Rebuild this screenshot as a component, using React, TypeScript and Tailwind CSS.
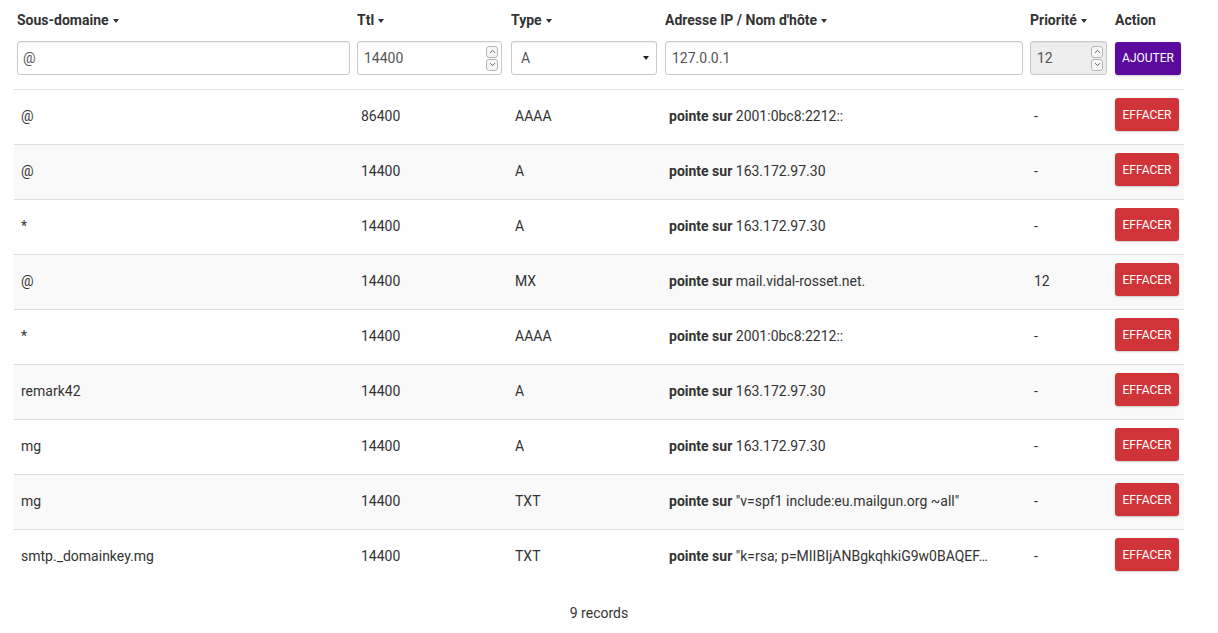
import { ChevronDown, ChevronUp } from "lucide-react";

interface DnsRecord {
  name: string;
  ttl: number;
  type: string;
  target: string;
  priority?: number;
}

const records: DnsRecord[] = [
  { name: "@", ttl: 86400, type: "AAAA", target: "2001:0bc8:2212::" },
  { name: "@", ttl: 14400, type: "A", target: "163.172.97.30" },
  { name: "*", ttl: 14400, type: "A", target: "163.172.97.30" },
  { name: "@", ttl: 14400, type: "MX", target: "mail.vidal-rosset.net.", priority: 12 },
  { name: "*", ttl: 14400, type: "AAAA", target: "2001:0bc8:2212::" },
  { name: "remark42", ttl: 14400, type: "A", target: "163.172.97.30" },
  { name: "mg", ttl: 14400, type: "A", target: "163.172.97.30" },
  { name: "mg", ttl: 14400, type: "TXT", target: "\"v=spf1 include:eu.mailgun.org ~all\"" },
  {
    name: "smtp._domainkey.mg",
    ttl: 14400,
    type: "TXT",
    target: "\"k=rsa; p=MIIBIjANBgkqhkiG9w0BAQEF…",
  },
];

const Caret = () => (
  <svg width="6" height="4" viewBox="0 0 6 4" className="inline-block ml-[4px] mb-[1px]">
    <path d="M0 0h6L3 4z" fill="#333" />
  </svg>
);

// petits boutons haut/bas du champ numérique
const Spinner = () => (
  <div className="flex flex-col gap-[1px]">
    <div className="w-[12px] h-[12px] rounded-[3px] border border-[#b5b5b5] bg-[#f7f7f7] flex items-center justify-center">
      <ChevronUp className="w-[9px] h-[9px] text-[#555]" strokeWidth={2.5} />
    </div>
    <div className="w-[12px] h-[12px] rounded-[3px] border border-[#b5b5b5] bg-[#f7f7f7] flex items-center justify-center">
      <ChevronDown className="w-[9px] h-[9px] text-[#555]" strokeWidth={2.5} />
    </div>
  </div>
);

const inputBase =
  "h-[34px] border border-[#c9c9c9] rounded-[3px] shadow-[inset_0_1px_1px_rgba(0,0,0,0.06)] flex items-center text-[14px] text-[#555]";

export default function App() {
  return (
    <div
      className="w-[1218px] min-h-[633px] bg-white text-[#333] text-[14px]"
      style={{ fontFamily: "Roboto, 'Liberation Sans', sans-serif" }}
    >
      <div className="pl-[14px] w-[1184px]">
        <table className="w-[1170px] table-fixed border-collapse">
          <colgroup>
            <col className="w-[340px]" />
            <col className="w-[154px]" />
            <col className="w-[154px]" />
            <col className="w-[365px]" />
            <col className="w-[85px]" />
            <col className="w-[72px]" />
          </colgroup>
          <thead>
            <tr className="text-left font-bold">
              <th className="pl-[3px] pt-[10px] pb-[6px] leading-[20px]">
                Sous-domaine
                <Caret />
              </th>
              <th className="pl-[3px] pt-[10px] pb-[6px] leading-[20px]">
                Ttl
                <Caret />
              </th>
              <th className="pl-[3px] pt-[10px] pb-[6px] leading-[20px]">
                Type
                <Caret />
              </th>
              <th className="pl-[3px] pt-[10px] pb-[6px] leading-[20px]">
                Adresse IP / Nom d'hôte
                <Caret />
              </th>
              <th className="pl-[3px] pt-[10px] pb-[6px] leading-[20px]">
                Priorité
                <Caret />
              </th>
              <th className="pl-[3px] pt-[10px] pb-[6px] leading-[20px]">Action</th>
            </tr>
            <tr>
              <td className="pl-[3px] pt-[5px] pb-[14px]">
                <div className={`${inputBase} w-[333px] pl-[5px]`}>@</div>
              </td>
              <td className="pl-[3px] pt-[5px] pb-[14px]">
                <div className={`${inputBase} w-[145px] pl-[6px] pr-[3px] justify-between`}>
                  <span>14400</span>
                  <Spinner />
                </div>
              </td>
              <td className="pl-[3px] pt-[5px] pb-[14px]">
                <div
                  className={`${inputBase} w-[146px] pl-[9px] justify-between bg-white shadow-[inset_-3px_-2px_0_#9a9a9a]`}
                >
                  <span>A</span>
                  <svg width="6" height="4" viewBox="0 0 6 4" className="mr-[7px]">
                    <path d="M0 0h6L3 4z" fill="#222" />
                  </svg>
                </div>
              </td>
              <td className="pl-[3px] pt-[5px] pb-[14px]">
                <div className={`${inputBase} w-[358px] pl-[6px]`}>127.0.0.1</div>
              </td>
              <td className="pl-[3px] pt-[5px] pb-[14px]">
                <div className={`${inputBase} w-[77px] pl-[6px] pr-[3px] justify-between bg-[#eeeeee]`}>
                  <span>12</span>
                  <Spinner />
                </div>
              </td>
              <td className="pl-[3px] pt-[5px] pb-[14px]">
                <button className="h-[33px] w-[66px] rounded-[3px] bg-[#5a0b9e] text-white text-[12px] shadow-[0_1px_2px_rgba(0,0,0,0.2)]">
                  AJOUTER
                </button>
              </td>
            </tr>
          </thead>
          <tbody>
            {records.map((r, i) => (
              <tr
                key={i}
                className={`h-[55px] border-t border-[#dddddd] ${i % 2 === 1 ? "bg-[#f9f9f9]" : "bg-white"}`}
              >
                <td className="pl-[7px] pb-[2px]">{r.name}</td>
                <td className="pl-[7px] pb-[2px]">{r.ttl}</td>
                <td className="pl-[7px] pb-[2px]">{r.type}</td>
                <td className="pl-[7px] pb-[2px] whitespace-nowrap">
                  <span className="font-bold">pointe sur</span> {r.target}
                </td>
                <td className="pl-[7px] pb-[2px]">{r.priority ?? "-"}</td>
                <td className="pl-[3px] pb-[5px]">
                  <button className="h-[33px] w-[64px] rounded-[3px] bg-[#d13438] text-white text-[12px] shadow-[0_1px_2px_rgba(0,0,0,0.2)]">
                    EFFACER
                  </button>
                </td>
              </tr>
            ))}
          </tbody>
        </table>
      </div>
      <div className="w-[1198px] text-center pt-[18px] leading-[20px]">9 records</div>
    </div>
  );
}
